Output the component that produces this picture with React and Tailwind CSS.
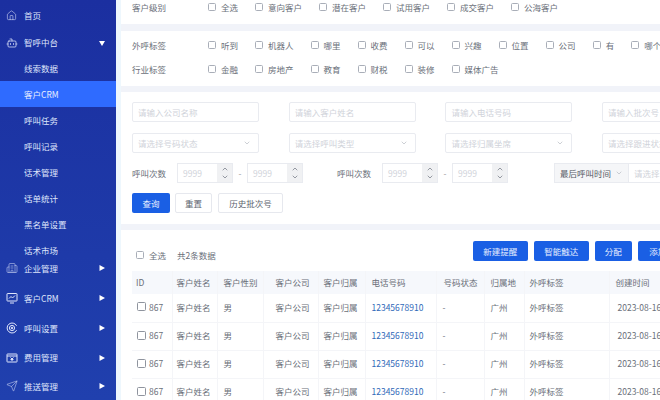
import { Bot, Building2, ChevronDown, ChevronUp, House, Send } from 'lucide-react';

const font = { fontFamily: '"Noto Sans CJK SC", "Noto Sans", sans-serif' };

const subMenus = ['线索数据', '客户CRM', '呼叫任务', '呼叫记录', '话术管理', '话单统计', '黑名单设置', '话术市场'];

function CrmIcon(props) {
  return (
    <svg width="12" height="12" viewBox="0 0 12 12" fill="none" stroke="currentColor" strokeWidth="0.9" {...props}>
      <rect x="1" y="1.5" width="10" height="7.5" rx="0.5" />
      <path d="M3 6.5l2-2 1.5 1.5L9 3.5M4 11h4" />
    </svg>
  );
}

function CallIcon(props) {
  return (
    <svg width="12" height="12" viewBox="0 0 12 12" fill="none" stroke="currentColor" strokeWidth="0.9" {...props}>
      <path d="M10.6 8.2A5 5 0 1 1 10.6 3.8" />
      <circle cx="6" cy="6" r="2.6" />
      <circle cx="6" cy="6" r="0.8" fill="currentColor" />
    </svg>
  );
}

function WalletIcon(props) {
  return (
    <svg width="12" height="12" viewBox="0 0 12 12" fill="none" stroke="currentColor" strokeWidth="0.9" {...props}>
      <rect x="1" y="2" width="10" height="8" rx="0.5" />
      <path d="M1 4h10M4.5 5.5L6 7l1.5-1.5M6 7v2M4.5 7.5h3" />
    </svg>
  );
}

const groups = [
  { label: '企业管理', Icon: Building2, h: 'h-[30px]' },
  { label: '客户CRM', Icon: CrmIcon, h: 'h-[30px]' },
  { label: '呼叫设置', Icon: CallIcon, h: 'h-[30px]' },
  { label: '费用管理', Icon: WalletIcon, h: 'h-[29px]' },
  { label: '推送管理', Icon: Send, h: 'h-[28px]' },
];

const levels = ['全选', '意向客户', '潜在客户', '试用客户', '成交客户', '公海客户'];
const callTags = ['听到', '机器人', '哪里', '收费', '可以', '兴趣', '位置', '公司', '有', '哪个'];
const industryTags = ['金融', '房地产', '教育', '财税', '装修', '媒体广告'];

const columns = [
  { label: 'ID', w: 'w-[40px]', pad: 'pl-[4px]' },
  { label: '客户姓名', w: 'w-[45px]', pad: 'pl-[4px]' },
  { label: '客户性别', w: 'w-[46px]', pad: 'pl-[6px]' },
  { label: '客户公司', w: 'w-[55px]', pad: 'pl-[12px]' },
  { label: '客户归属', w: 'w-[47px]', pad: 'pl-[5px]' },
  { label: '电话号码', w: 'w-[71px]', pad: 'pl-[6px]' },
  { label: '号码状态', w: 'w-[48px]', pad: 'pl-[7px]' },
  { label: '归属地', w: 'w-[40px]', pad: 'pl-[6px]' },
  { label: '外呼标签', w: 'w-[85px]', pad: 'pl-[5px]' },
  { label: '创建时间', w: 'w-[90px]', pad: 'pl-[6px]' },
];

function Caret({ down }) {
  return (
    <svg width="6" height="6" viewBox="0 0 6 6" className="ml-auto mr-[11px] shrink-0 text-white">
      <path d={down ? 'M0 1h6L3 6z' : 'M0.5 0L6 3L0.5 6z'} fill="currentColor" />
    </svg>
  );
}

function Sidebar() {
  return (
    <aside className="w-[116px] h-[400px] shrink-0 overflow-hidden bg-gradient-to-b from-[#1b2fa0] to-[#2040ae] text-[8.5px] text-[#dfe5fb]">
      <div className="h-[30px] flex items-center pl-[6px] gap-[7px]">
        <House size={11} strokeWidth={1.2} />
        <span>首页</span>
      </div>
      <div className="h-[25px] flex items-center pl-[6px] gap-[6px]">
        <Bot size={12} strokeWidth={1.5} />
        <span>智呼中台</span>
        <Caret down />
      </div>
      {subMenus.map((item, i) => (
        <div
          key={item}
          className={`h-[26px] flex items-center pl-[24px] ${i === 1 ? 'bg-[#2f6bff] text-[#e8eeff]' : ''}`}
        >
          {item}
        </div>
      ))}
      <div className="-mt-[10px]">
        {groups.map(({ label, Icon, h }) => (
          <div key={label} className={`${h} flex items-center pl-[6px] gap-[6px]`}>
            <Icon width={12} height={12} strokeWidth={1} />
            <span>{label}</span>
            <Caret />
          </div>
        ))}
      </div>
    </aside>
  );
}

function Check({ label, className = '' }) {
  return (
    <label className={`flex items-center gap-[5px] shrink-0 ${className}`}>
      <span className="w-[8px] h-[8px] rounded-[1.5px] border border-[#a9aeb8] bg-white" />
      <span>{label}</span>
    </label>
  );
}

function FilterRow({ label, items, className = '' }) {
  return (
    <div className={`flex items-center ${className}`}>
      <span className="w-[76px] shrink-0">{label}</span>
      <div className="flex gap-[17px]">
        {items.map((item) => (
          <Check key={item} label={item} />
        ))}
      </div>
    </div>
  );
}

function TextField({ placeholder, select }) {
  return (
    <div className="w-[127px] h-[20px] shrink-0 flex items-center justify-between px-[5px] rounded-[2px] border border-[#e9ebf0] text-[#d0d3da]">
      <span className="whitespace-nowrap">{placeholder}</span>
      {select && <ChevronDown size={8} className="mr-[2px] text-[#b4b8c0]" />}
    </div>
  );
}

function NumberField() {
  return (
    <div className="w-[56px] h-[20px] flex items-center justify-between pl-[5px] border border-[#e9ebf0] text-[#d0d3da]">
      <span>9999</span>
      <div className="w-[15px] h-full flex flex-col items-center justify-center bg-[#f0f1f3] text-[#666c78]">
        <ChevronUp size={8} />
        <ChevronDown size={8} />
      </div>
    </div>
  );
}

function CountRange({ className = '' }) {
  return (
    <div className={`flex items-center shrink-0 ${className}`}>
      <span className="w-[45px]">呼叫次数</span>
      <NumberField />
      <span className="w-[14px] text-center text-[#999]">-</span>
      <NumberField />
    </div>
  );
}

function Btn({ children, primary, className = '' }) {
  return (
    <button
      type="button"
      className={`h-[20px] rounded-[2px] shrink-0 ${
        primary ? 'bg-[#1a5fe4] text-[#e6eeff]' : 'border border-[#e6e8ee] bg-white text-[#60656f]'
      } ${className}`}
    >
      {children}
    </button>
  );
}

function Filters() {
  return (
    <div className="h-[132px] mt-[6px] bg-white pl-[11px] pt-[10px]">
      <div className="flex gap-[29.7px]">
        <TextField placeholder="请输入公司名称" />
        <TextField placeholder="请输入客户姓名" />
        <TextField placeholder="请输入电话号码" />
        <TextField placeholder="请输入批次号" />
      </div>
      <div className="flex gap-[29.7px] mt-[11px]">
        <TextField placeholder="请选择号码状态" select />
        <TextField placeholder="请选择呼叫类型" select />
        <TextField placeholder="请选择归属坐席" select />
        <TextField placeholder="请选择跟进状态" />
      </div>
      <div className="flex items-center mt-[10px]">
        <CountRange />
        <CountRange className="ml-[34px]" />
        <div className="flex ml-[46px] shrink-0 h-[20px]">
          <div className="w-[75px] flex items-center justify-between px-[5px] bg-[#f5f6f8] border border-[#e9ebf0] text-[#555b66]">
            <span className="whitespace-nowrap">最后呼叫时间</span>
            <ChevronDown size={8} className="text-[#b4b8c0]" />
          </div>
          <div className="w-[60px] flex items-center pl-[5px] border-y border-[#e9ebf0] text-[#d0d3da]">请选择</div>
        </div>
      </div>
      <div className="flex gap-[5px] mt-[10px]">
        <Btn primary className="w-[38px]">查询</Btn>
        <Btn className="w-[37px]">重置</Btn>
        <Btn className="w-[65px] ml-[1px]">历史批次号</Btn>
      </div>
    </div>
  );
}

function CustomerTable() {
  const cell = 'border-r border-[#f4f5f8] font-normal text-left whitespace-nowrap';
  const body = `${cell} pb-[2px]`;
  return (
    <table className="table-fixed w-[567px] border-collapse">
      <thead>
        <tr className="h-[23px] bg-[#f6f8fc]">
          {columns.map((c) => (
            <th key={c.label} className={`${c.w} ${c.pad} ${cell}`}>{c.label}</th>
          ))}
        </tr>
      </thead>
      <tbody>
        {[0, 1, 2, 3].map((row) => (
          <tr key={row} className="h-[28px] border-b border-[#f4f5f8]">
            <td className={`${body} pl-[5px]`}>
              <div className="flex items-center gap-[3px]">
                <span className="w-[9px] h-[9px] rounded-[1.5px] border border-[#8f949e]" />
                <span>867</span>
              </div>
            </td>
            <td className={`${body} pl-[4px]`}>客户姓名</td>
            <td className={`${body} pl-[6px]`}>男</td>
            <td className={`${body} pl-[12px]`}>客户公司</td>
            <td className={`${body} pl-[5px]`}>客户归属</td>
            <td className={`${body} pl-[6px] text-[#2f68b8]`}>12345678910</td>
            <td className={`${body} pl-[6px]`}>-</td>
            <td className={`${body} pl-[6px]`}>广州</td>
            <td className={`${body} pl-[5px]`}>外呼标签</td>
            <td className={`${body} pl-[8px]`}>2023-08-16 12:00</td>
          </tr>
        ))}
      </tbody>
    </table>
  );
}

export default function App() {
  return (
    <div style={font} className="w-[660px] h-[400px] overflow-hidden flex bg-[#f1f3f9] text-[8.5px] leading-none text-[#6a6f79]">
      <Sidebar />
      <main className="w-[544px] shrink-0 pl-[5px] bg-[#eef7fd]">
        <div className="w-[580px] bg-[#f1f3f9] overflow-hidden h-[400px]">
          <div className="h-[24px] bg-white pl-[11px] pt-[3px]">
            <FilterRow label="客户级别" items={levels} />
          </div>
          <div className="h-[55px] mt-[7px] bg-white pl-[11px] pt-[10px]">
            <FilterRow label="外呼标签" items={callTags} />
            <FilterRow label="行业标签" items={industryTags} className="mt-[15px]" />
          </div>
          <Filters />
          <div className="h-[170px] mt-[6px] bg-white pl-[11px] pt-[11px]">
            <div className="flex items-center h-[20px]">
              <Check label="全选" className="ml-[4px] mt-[8px]" />
              <span className="ml-[11px] mt-[8px]">共2条数据</span>
              <div className="flex gap-[6px] ml-[257px]">
                <Btn primary className="w-[55px]">新建提醒</Btn>
                <Btn primary className="w-[55px]">智能触达</Btn>
                <Btn primary className="w-[37px]">分配</Btn>
                <Btn primary className="w-[40px]">添加</Btn>
              </div>
            </div>
            <div className="mt-[10px]">
              <CustomerTable />
            </div>
          </div>
        </div>
      </main>
    </div>
  );
}
